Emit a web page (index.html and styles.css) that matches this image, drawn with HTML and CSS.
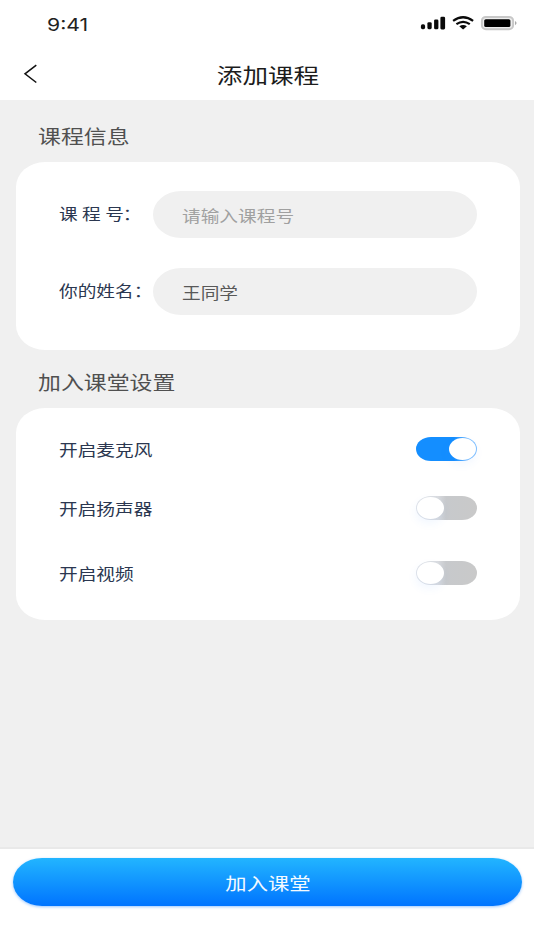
FILE: index.html
```html
<!DOCTYPE html>
<html lang="zh-CN">
<head>
<meta charset="utf-8">
<title>添加课程</title>
<link rel="stylesheet" href="styles.css">
</head>
<body>
<div class="screen">
  <header class="top">
    <div class="status">
      <span class="time">9:41</span>
      <svg class="status-icons" width="98" height="18" viewBox="0 0 98 18">
        <g fill="#0a0a0a">
          <rect x="0.9" y="9.2" width="4.2" height="5" rx="1.7"/>
          <rect x="7.4" y="7.2" width="4.3" height="7" rx="1.4"/>
          <rect x="14.1" y="4.4" width="4.3" height="9.8" rx="1.3"/>
          <rect x="20.4" y="1.7" width="4.7" height="12.7" rx="1.3"/>
          <path d="M39.3 11.2 L43.1 14.4 L46.9 11.2 Q43.1 8.8 39.3 11.2Z"/>
        </g>
        <g fill="none" stroke="#0a0a0a" stroke-width="2.2">
          <path d="M33.1 5.9 Q43.1 -1.4 53.1 5.9"/>
          <path d="M36.4 9.2 Q43.1 4.4 49.8 9.2"/>
        </g>
        <rect x="61.9" y="1.9" width="31.2" height="12.4" rx="4" fill="#eee" stroke="#c8c8c8" stroke-width="2"/>
        <rect x="64.2" y="4.2" width="26.2" height="7.9" rx="1.6" fill="#000"/>
        <path d="M95 5.9 Q98.2 8.1 95 10.3Z" fill="#aaa"/>
      </svg>
    </div>
    <div class="nav">
      <svg class="back" width="16" height="22" viewBox="0 0 16 22"><path d="M13.3 2.2 L2 10.8 L13.3 19.5" fill="none" stroke="#111" stroke-width="1.5"/></svg>
      <h1 class="title">添加课程</h1>
    </div>
  </header>
  <main class="content">
    <h2 class="section section-info"><span class="wide">课程信息</span></h2>
    <section class="card card-info">
      <div class="field">
        <span class="label"><span class="wide label-spaced">课 程 <span class="tight">号</span>：</span></span>
        <div class="input placeholder"><span class="wide">请输入课程号</span></div>
      </div>
      <div class="field">
        <span class="label"><span class="wide">你的姓名：</span></span>
        <div class="input"><span class="wide">王同学</span></div>
      </div>
    </section>
    <h2 class="section section-settings"><span class="wide">加入课堂设置</span></h2>
    <section class="card card-settings">
      <div class="row"><span class="wide">开启麦克风</span><span class="toggle on"><i class="knob"></i></span></div>
      <div class="row"><span class="wide">开启扬声器</span><span class="toggle"><i class="knob"></i></span></div>
      <div class="row"><span class="wide">开启视频</span><span class="toggle"><i class="knob"></i></span></div>
    </section>
  </main>
  <footer class="footer">
    <button class="join"><span class="join-text">加入课堂</span></button>
  </footer>
</div>
</body>
</html>
```
FILE: styles.css
```css
* { box-sizing: border-box; }
body {
  margin: 0;
  background: #fff;
  font-family: "Noto Sans CJK SC", sans-serif;
}
.screen {
  width: 534px;
  height: 950px;
  display: flex;
  flex-direction: column;
  overflow: hidden;
}
.top { height: 100px; background: #fff; }
.status {
  height: 48px;
  padding: 15px 16px 0 47px;
  display: flex;
  justify-content: space-between;
}
.time {
  font-family: Inter, sans-serif;
  font-size: 17.5px;
  line-height: 20px;
  color: #222;
  transform: scaleX(1.21);
  transform-origin: left;
}
.nav {
  height: 52px;
  padding: 15px 22px 0 23px;
  display: grid;
  grid-template-columns: 16px 1fr 15px;
}
.title {
  margin: 0;
  text-align: center;
  font-size: 21px;
  font-weight: 400;
  line-height: 22px;
  color: #1c1c1c;
  transform: scaleX(1.22);
}
.wide {
  display: inline-block;
  white-space: pre;
  transform: scaleX(1.205);
  transform-origin: left;
}
.content {
  flex: 1;
  padding: 0 14px 0 16px;
  background: #f0f0f0;
}
.section {
  margin: 0;
  padding-left: 22px;
  font-size: 19px;
  font-weight: 400;
  color: #505050;
}
.section-info { height: 62px; line-height: 72px; }
.section-settings { height: 58px; line-height: 64px; }
.card {
  background: #fff;
  border-radius: 29px / 25px;
  color: #2b3750;
  font-size: 15.5px;
}
.card-info {
  height: 188px;
  padding: 29px 43px 35px;
  display: flex;
  flex-direction: column;
  justify-content: space-between;
}
.field { display: flex; height: 47px; }
.label { width: 94px; line-height: 45px; }
.label-spaced { word-spacing: 0.2px; }
.tight { letter-spacing: -0.9px; }
.input {
  flex: 1;
  padding-left: 29px;
  border-radius: 28px / 23.5px;
  background: #f0f0f0;
  line-height: 48px;
  color: #585858;
}
.placeholder { color: #a0a0a0; }
.card-settings {
  height: 212px;
  padding: 29px 43px 35px;
  display: grid;
  grid-template-rows: 24px 24px 24px;
  row-gap: 35px;
}
.row {
  display: flex;
  justify-content: space-between;
  align-items: center;
  line-height: 24px;
}
.row:last-child { margin-top: 6px; margin-bottom: -6px; }
.toggle {
  width: 61px;
  height: 24px;
  padding: 1px;
  display: flex;
  border-radius: 15px / 12px;
  background: linear-gradient(90deg, #e2e5ea 0, #d9dbdf 22px, #c7c9cc 30px, #c9c9c9);
}
.knob {
  width: 27px;
  height: 22px;
  border-radius: 50%;
  background: #fff;
  box-shadow: -1px 4px 10px rgba(60, 140, 255, 0.08);
}
.toggle.on {
  justify-content: flex-end;
  background: linear-gradient(90deg, #148eff 38px, #82c1ff 54px);
}
.footer {
  height: 103px;
  padding: 9px 12px 0 13px;
  border-top: 2px solid #e9e9e9;
  background: #fff;
}
.join {
  display: block;
  width: 100%;
  height: 48px;
  padding: 0;
  border: 0;
  border-radius: 29px / 24px;
  background: linear-gradient(#22b5ff, #0074ff);
  box-shadow: 0 1px 3px rgba(0, 116, 255, 0.4);
  font: 17.5px/49px "Noto Sans CJK SC", sans-serif;
  color: #f4faff;
}
.join-text { display: inline-block; transform: scaleX(1.22); }
```
